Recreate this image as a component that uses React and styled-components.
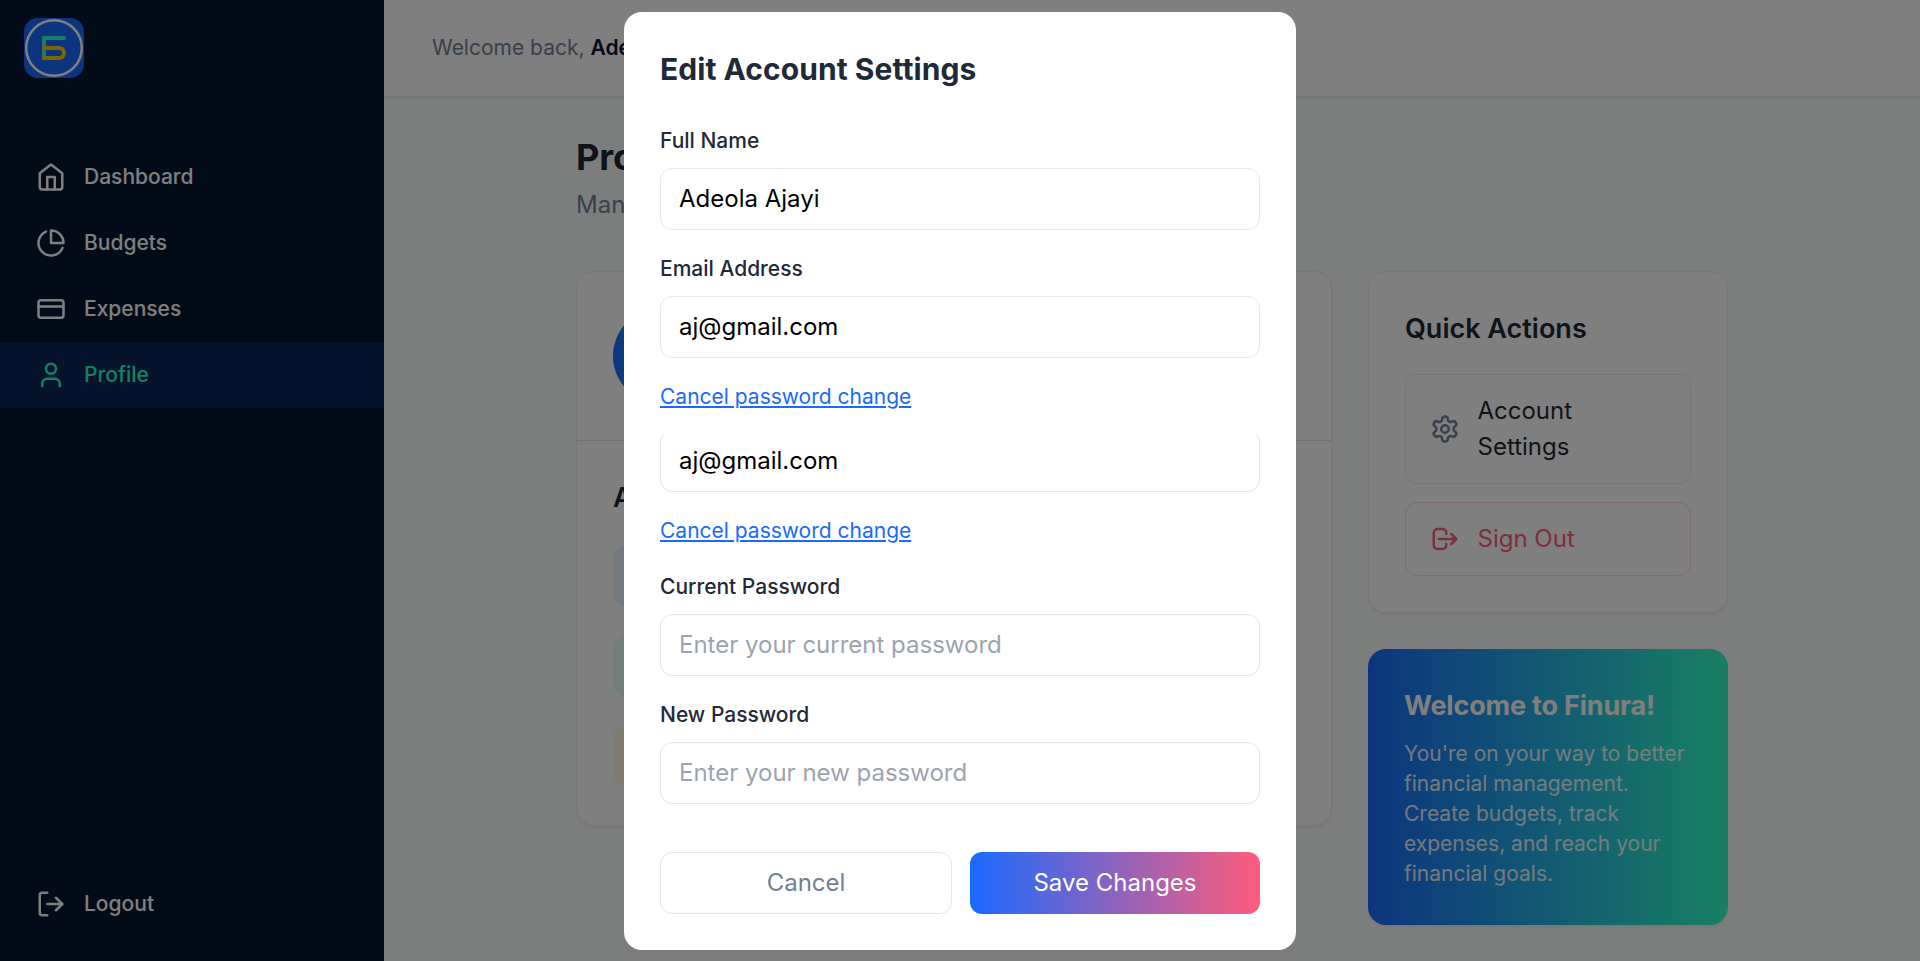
import React from "react";
import styled, { createGlobalStyle } from "styled-components";

const GlobalStyle = createGlobalStyle`
  *, *::before, *::after { box-sizing: border-box; }
  html, body { margin: 0; padding: 0; height: 100%; overflow: hidden; }
  body, button, input {
    font-family: Inter, "Liberation Sans", sans-serif;
    font-size: 24px;
    line-height: 36px;
  }
  h1, h2, h3, p { margin: 0; }
`;

const Page = styled.div`
  display: flex;
  height: 961px;
  background: #f9fdfb;
  color: #1f2937;
  overflow: hidden;
`;

const Sidebar = styled.aside`
  display: flex;
  flex-direction: column;
  flex: none;
  width: 384px;
  background: #081730;
`;

const LogoBar = styled.div`
  height: 96px;
  padding: 18px 24px;
`;

const Nav = styled.nav`
  display: flex;
  flex-direction: column;
  flex: 1;
  padding-top: 48px;
`;

const NavItem = styled.a`
  display: flex;
  align-items: center;
  gap: 18px;
  height: 66px;
  padding: 0 36px;
  font-size: 21px;
  line-height: 30px;
  font-weight: 500;
  color: ${(p) => (p.$active ? "#31ffc8" : "#ffffff")};
  background: ${(p) => (p.$active ? "#0a2859" : "transparent")};
`;

const SidebarFooter = styled.div`
  padding-bottom: 24px;
`;

const Main = styled.div`
  flex: 1;
  min-width: 0;
`;

const TopBar = styled.header`
  display: flex;
  align-items: center;
  height: 97px;
  padding: 0 48px;
  background: #ffffff;
  border-bottom: 1px solid #e6ebf1;
  box-shadow: 0 1.5px 3px rgba(0, 0, 0, 0.05);
  font-size: 21px;
  line-height: 30px;
  color: #718096;

  strong { font-weight: 600; color: #081730; }
`;

const Content = styled.div`
  width: 1152px;
  margin: 0 auto;
  padding-top: 36px;
`;

const Title = styled.h1`
  font-size: 36px;
  line-height: 48px;
  font-weight: 700;
`;

const Subtitle = styled.p`
  margin-top: 6px;
  color: #718096;
`;

const Columns = styled.div`
  display: grid;
  grid-template-columns: 756px 360px;
  gap: 36px;
  align-items: start;
  margin-top: 48px;
`;

const SideColumn = styled.div`
  display: flex;
  flex-direction: column;
  gap: 36px;
`;

const Card = styled.section`
  background: #ffffff;
  border: 1px solid #e9ecef;
  border-radius: 18px;
  box-shadow: 0 1.5px 3px rgba(0, 0, 0, 0.05);
`;

const ProfileCard = styled(Card)`
  height: 555px;
`;

const ProfileHead = styled.div`
  height: 169px;
  padding: 36px;
  border-bottom: 1px solid #dfe3ea;
`;

const Avatar = styled.div`
  width: 96px;
  height: 96px;
  border-radius: 50%;
  background: linear-gradient(90deg, #1a6aff, #31ffc8);
`;

const ProfileBody = styled.div`
  display: flex;
  flex-direction: column;
  align-items: flex-start;
  padding: 36px;
`;

const SectionTitle = styled.h2`
  font-size: 27px;
  line-height: 42px;
  font-weight: 600;
  margin-bottom: ${(p) => p.$gap || "24px"};
`;

const Tile = styled.div`
  width: 60px;
  height: 60px;
  margin-bottom: 30px;
  border-radius: 12px;
  background: ${(p) => p.$tone};
`;

const ActionsCard = styled(Card)`
  display: flex;
  flex-direction: column;
  padding: 36px;
`;

const ActionButton = styled.div`
  display: flex;
  align-items: center;
  gap: 18px;
  padding: 18px 23.5px;
  border: 1px solid ${(p) => (p.$danger ? "#ffd6de" : "#e9ecef")};
  border-radius: 12px;
  color: ${(p) => (p.$danger ? "#ff5c7c" : "#1f2937")};

  & + & { margin-top: 18px; }
  svg { color: ${(p) => (p.$danger ? "#ff5c7c" : "#718096")}; }
`;

const WelcomeCard = styled.section`
  padding: 36px;
  height: 276px;
  border-radius: 18px;
  background: linear-gradient(90deg, #1a6aff, #31ffc8);
  color: #ffffff;
  box-shadow: 0 1.5px 3px rgba(0, 0, 0, 0.05);
`;

const WelcomeTitle = styled.h3`
  font-size: 27px;
  line-height: 42px;
  font-weight: 700;
  letter-spacing: -0.2px;
  margin-bottom: 12px;
`;

const WelcomeText = styled.p`
  font-size: 21px;
  line-height: 30px;
  opacity: 0.9;
`;

const Overlay = styled.div`
  position: fixed;
  inset: 0;
  display: flex;
  align-items: flex-start;
  justify-content: center;
  padding-top: 12px;
  background: rgba(0, 0, 0, 0.5);
`;

const Modal = styled.div`
  width: 672px;
  height: 938px;
  padding: 36px;
  border-radius: 18px;
  background: #ffffff;
  color: #1f2937;
`;

const ModalTitle = styled.h2`
  font-size: 30px;
  line-height: 42px;
  font-weight: 700;
  letter-spacing: 0.05px;
  margin-bottom: 36px;
`;

const Field = styled.label`
  display: block;
  margin-bottom: 24px;
`;

const FieldLabel = styled.span`
  display: block;
  margin-bottom: 12px;
  font-size: 21px;
  line-height: 30px;
  font-weight: 500;
`;

const Input = styled.input`
  display: block;
  width: 100%;
  height: 62px;
  padding: 0 18px 2px;
  border: 1px solid #e2e8f0;
  border-radius: 12px;
  background: #ffffff;
  color: #000000;
  outline: none;

  &::placeholder { color: #9ca3af; opacity: 1; }
`;

const ClippedField = styled.div`
  display: flex;
  align-items: flex-end;
  height: 58px;
  margin: 22px 0 24px;
  overflow: hidden;

  ${Input} { flex: none; }
`;

const LinkButton = styled.button`
  display: block;
  height: 30px;
  padding: 0;
  border: 0;
  background: none;
  color: #1a6aff;
  font-size: 21px;
  line-height: 30px;
  text-decoration: underline;
`;

const Passwords = styled.div`
  margin-top: 26px;
`;

const ModalActions = styled.div`
  display: flex;
  gap: 18px;
  margin-top: 48px;
`;

const ModalButton = styled.button`
  width: ${(p) => (p.$primary ? "290px" : "292px")};
  height: 62px;
  padding: 0;
  border: ${(p) => (p.$primary ? "0" : "1px solid #e2e8f0")};
  border-radius: 12px;
  background: ${(p) => (p.$primary ? "linear-gradient(90deg, #1a6aff, #ff5c7c)" : "#ffffff")};
  color: ${(p) => (p.$primary ? "#ffffff" : "#718096")};
`;

const IconSvg = styled.svg`
  flex: none;
  width: 30px;
  height: 30px;
  fill: none;
  stroke: currentColor;
  stroke-width: 2;
  stroke-linecap: round;
  stroke-linejoin: round;
`;

const Icon = ({ children }) => <IconSvg viewBox="0 0 24 24">{children}</IconSvg>;

const HomeIcon = () => (
  <Icon>
    <path d="m3 9 9-7 9 7v11a2 2 0 0 1-2 2H5a2 2 0 0 1-2-2z" />
    <path d="M9 22V12h6v10" />
  </Icon>
);

const PieIcon = () => (
  <Icon>
    <path d="M21.21 15.89A10 10 0 1 1 8 2.83" />
    <path d="M22 12A10 10 0 0 0 12 2v10z" />
  </Icon>
);

const CardIcon = () => (
  <Icon>
    <rect x="2" y="5" width="20" height="14" rx="2" />
    <path d="M2 10h20" />
  </Icon>
);

const UserIcon = () => (
  <Icon>
    <path d="M19 21v-2a4 4 0 0 0-4-4H9a4 4 0 0 0-4 4v2" />
    <circle cx="12" cy="7" r="4" />
  </Icon>
);

const LogoutIcon = () => (
  <Icon>
    <path d="M9 21H5a2 2 0 0 1-2-2V5a2 2 0 0 1 2-2h4" />
    <path d="m16 17 5-5-5-5" />
    <path d="M21 12H9" />
  </Icon>
);

const GearIcon = () => (
  <Icon>
    <path d="M12.22 2h-.44a2 2 0 0 0-2 2v.18a2 2 0 0 1-1 1.73l-.43.25a2 2 0 0 1-2 0l-.15-.08a2 2 0 0 0-2.73.73l-.22.38a2 2 0 0 0 .73 2.73l.15.1a2 2 0 0 1 1 1.72v.51a2 2 0 0 1-1 1.74l-.15.09a2 2 0 0 0-.73 2.73l.22.38a2 2 0 0 0 2.73.73l.15-.08a2 2 0 0 1 2 0l.43.25a2 2 0 0 1 1 1.73V20a2 2 0 0 0 2 2h.44a2 2 0 0 0 2-2v-.18a2 2 0 0 1 1-1.73l.43-.25a2 2 0 0 1 2 0l.15.08a2 2 0 0 0 2.73-.73l.22-.39a2 2 0 0 0-.73-2.73l-.15-.08a2 2 0 0 1-1-1.74v-.5a2 2 0 0 1 1-1.74l.15-.09a2 2 0 0 0 .73-2.73l-.22-.38a2 2 0 0 0-2.73-.73l-.15.08a2 2 0 0 1-2 0l-.43-.25a2 2 0 0 1-1-1.73V4a2 2 0 0 0-2-2z" />
    <circle cx="12" cy="12" r="3" />
  </Icon>
);

const SignOutIcon = () => (
  <Icon>
    <path d="M17 16l4-4m0 0l-4-4m4 4H7m6 4v1a3 3 0 0 1-3 3H6a3 3 0 0 1-3-3V7a3 3 0 0 1 3-3h4a3 3 0 0 1 3 3v1" />
  </Icon>
);

const Logo = () => (
  <svg width="60" height="60" viewBox="0 0 60 60" fill="none">
    <rect width="60" height="60" rx="14" fill="#1a6aff" />
    <circle cx="30" cy="30" r="27.8" stroke="#ffffff" strokeWidth="2.5" />
    <path d="M40 20H20v20" stroke="#31ffc8" strokeWidth="4" strokeLinecap="round" strokeLinejoin="round" />
    <path d="M20 30h15a5 5 0 0 1 0 10H20" stroke="#ffc800" strokeWidth="4" strokeLinecap="round" />
  </svg>
);

const NAV = [
  ["Dashboard", HomeIcon],
  ["Budgets", PieIcon],
  ["Expenses", CardIcon],
  ["Profile", UserIcon],
];

const TILES = ["#e8f0ff", "#e6fbf5", "#fff8de"];

export default function App() {
  return (
    <>
      <GlobalStyle />
      <Page>
        <Sidebar>
          <LogoBar>
            <Logo />
          </LogoBar>
          <Nav>
            {NAV.map(([label, Glyph]) => (
              <NavItem key={label} $active={label === "Profile"}>
                <Glyph />
                {label}
              </NavItem>
            ))}
          </Nav>
          <SidebarFooter>
            <NavItem>
              <LogoutIcon />
              Logout
            </NavItem>
          </SidebarFooter>
        </Sidebar>
        <Main>
          <TopBar>
            <span>
              Welcome back, <strong>Adeola</strong>
            </span>
          </TopBar>
          <Content>
            <Title>Profile</Title>
            <Subtitle>Manage your account</Subtitle>
            <Columns>
              <ProfileCard>
                <ProfileHead>
                  <Avatar />
                </ProfileHead>
                <ProfileBody>
                  <SectionTitle $gap="27px">Account</SectionTitle>
                  {TILES.map((tone) => (
                    <Tile key={tone} $tone={tone} />
                  ))}
                </ProfileBody>
              </ProfileCard>
              <SideColumn>
                <ActionsCard>
                  <SectionTitle>Quick Actions</SectionTitle>
                  <ActionButton>
                    <GearIcon />
                    <span>
                      Account
                      <br />
                      Settings
                    </span>
                  </ActionButton>
                  <ActionButton $danger>
                    <SignOutIcon />
                    <span>Sign Out</span>
                  </ActionButton>
                </ActionsCard>
                <WelcomeCard>
                  <WelcomeTitle>Welcome to Finura!</WelcomeTitle>
                  <WelcomeText>
                    You're on your way to better financial management. Create budgets, track expenses, and reach your
                    financial goals.
                  </WelcomeText>
                </WelcomeCard>
              </SideColumn>
            </Columns>
          </Content>
        </Main>
      </Page>
      <Overlay>
        <Modal>
          <ModalTitle>Edit Account Settings</ModalTitle>
          <Field>
            <FieldLabel>Full Name</FieldLabel>
            <Input defaultValue="Adeola Ajayi" />
          </Field>
          <Field>
            <FieldLabel>Email Address</FieldLabel>
            <Input defaultValue="aj@gmail.com" />
          </Field>
          <LinkButton>Cancel password change</LinkButton>
          <ClippedField>
            <Input defaultValue="aj@gmail.com" />
          </ClippedField>
          <LinkButton>Cancel password change</LinkButton>
          <Passwords>
            <Field>
              <FieldLabel>Current Password</FieldLabel>
              <Input placeholder="Enter your current password" />
            </Field>
            <Field>
              <FieldLabel>New Password</FieldLabel>
              <Input placeholder="Enter your new password" />
            </Field>
          </Passwords>
          <ModalActions>
            <ModalButton>Cancel</ModalButton>
            <ModalButton $primary>Save Changes</ModalButton>
          </ModalActions>
        </Modal>
      </Overlay>
    </>
  );
}
